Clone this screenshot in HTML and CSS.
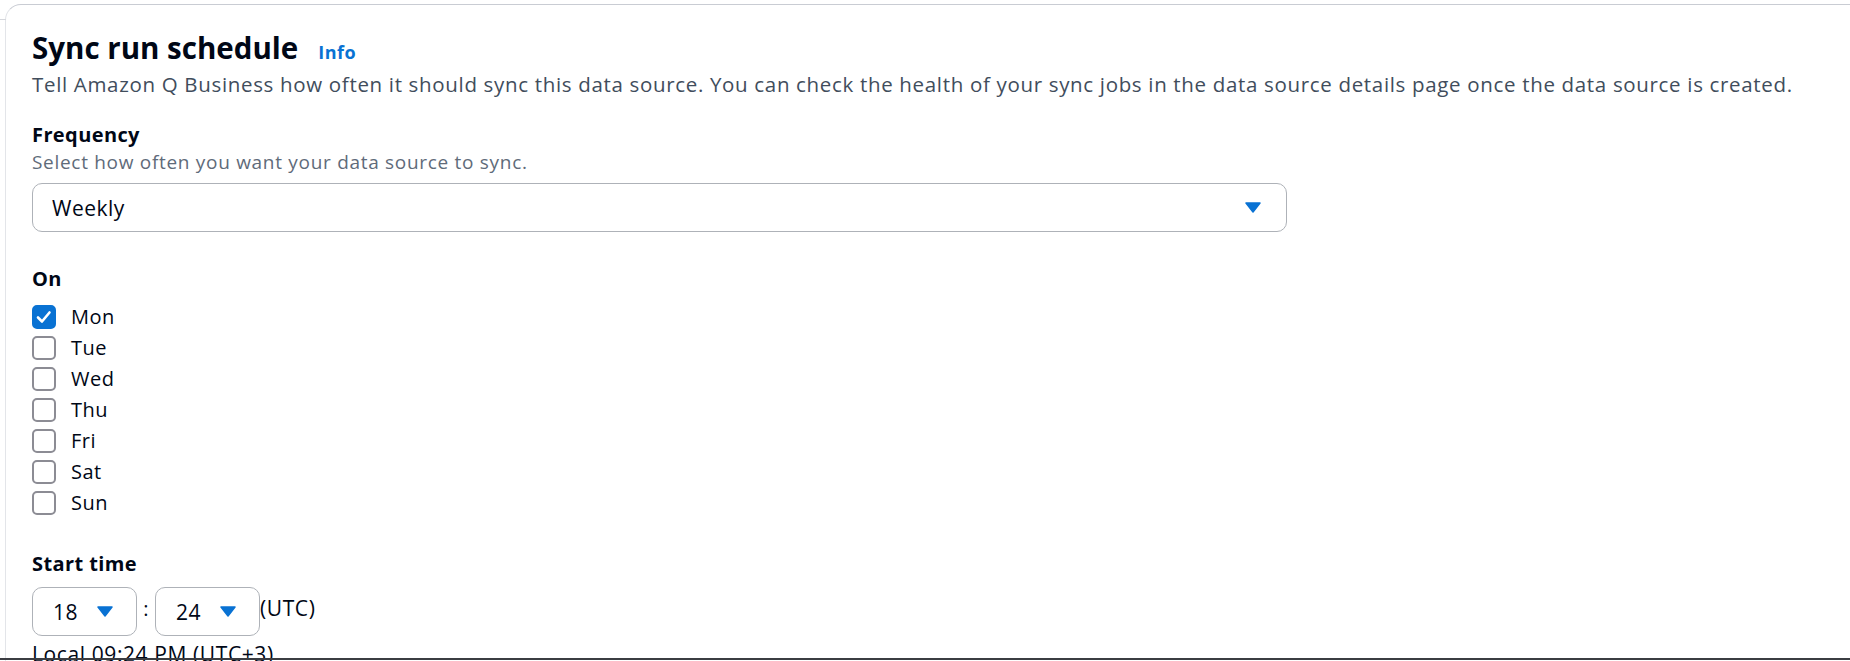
FILE: index.html
```html
<!DOCTYPE html>
<html lang="en">
<head>
<meta charset="utf-8">
<title>Sync run schedule</title>
<link rel="stylesheet" href="styles.css">
</head>
<body>
<div class="edge-tick"></div>
<main class="card">
  <header class="head">
    <h2 class="title">Sync run schedule</h2>
    <a class="info" href="#">Info</a>
  </header>
  <p class="desc">Tell Amazon Q Business how often it should sync this data source. You can check the health of your sync jobs in the data source details page once the data source is created.</p>

  <section class="field freq">
    <div class="label">Frequency</div>
    <div class="hint">Select how often you want your data source to sync.</div>
    <div class="select wide">
      <span class="value">Weekly</span>
      <svg class="caret" viewBox="0 0 16 11" width="16" height="11"><path d="M1 1 H15 L8 10 Z" fill="#0972d3" stroke="#0972d3" stroke-width="1.5" stroke-linejoin="round"/></svg>
    </div>
  </section>

  <section class="field on">
    <div class="label">On</div>
    <ul class="days">
      <li class="day"><span class="box checked"><svg viewBox="0 0 24 24" width="24" height="24"><polyline points="6,12.5 10,16.5 17.5,7.5" fill="none" stroke="#fff" stroke-width="2.6" stroke-linecap="round" stroke-linejoin="round"/></svg></span><span class="day-name">Mon</span></li>
      <li class="day"><span class="box"></span><span class="day-name">Tue</span></li>
      <li class="day"><span class="box"></span><span class="day-name">Wed</span></li>
      <li class="day"><span class="box"></span><span class="day-name">Thu</span></li>
      <li class="day"><span class="box"></span><span class="day-name">Fri</span></li>
      <li class="day"><span class="box"></span><span class="day-name">Sat</span></li>
      <li class="day"><span class="box"></span><span class="day-name">Sun</span></li>
    </ul>
  </section>

  <section class="field start">
    <div class="label">Start time</div>
    <div class="time-row">
      <div class="select small">
        <span class="value">18</span>
        <svg class="caret" viewBox="0 0 16 11" width="16" height="11"><path d="M1 1 H15 L8 10 Z" fill="#0972d3" stroke="#0972d3" stroke-width="1.5" stroke-linejoin="round"/></svg>
      </div>
      <span class="colon">:</span>
      <div class="select small">
        <span class="value">24</span>
        <svg class="caret" viewBox="0 0 16 11" width="16" height="11"><path d="M1 1 H15 L8 10 Z" fill="#0972d3" stroke="#0972d3" stroke-width="1.5" stroke-linejoin="round"/></svg>
      </div>
      <span class="tz">(UTC)</span>
    </div>
    <div class="local">Local 09:24 PM (UTC+3)</div>
  </section>
</main>
<div class="bottom-line"></div>
</body>
</html>
```

FILE: styles.css
```css
* { box-sizing: border-box; }

html, body {
  margin: 0;
  padding: 0;
  height: 661px;
  overflow: hidden;
  background: #ffffff;
}

body {
  font-family: "Open Sans", "Noto Sans", Arial, sans-serif;
  color: #000716;
  padding: 4px 0 0 5px;
}

.edge-tick {
  position: absolute;
  top: 19px;
  left: 0;
  width: 6px;
  height: 1px;
  background: #d5d7dc;
}

.card {
  border-top: 1px solid #c9ccd3;
  border-left: 1px solid #e3e5e9;
  border-top-left-radius: 16px;
  padding: 25px 0 0 26px;
  height: 657px;
}

.head {
  display: flex;
  align-items: baseline;
  gap: 20px;
  height: 36px;
}

.title {
  margin: 0;
  font-size: 29.5px;
  line-height: 36px;
  font-weight: 700;
  color: #000716;
}

.info {
  font-size: 18px;
  letter-spacing: 0.5px;
  font-weight: 700;
  color: #0972d3;
  text-decoration: none;
}

.desc {
  margin: 4px 0 0;
  font-size: 20.5px;
  letter-spacing: 0.67px;
  line-height: 28px;
  color: #414d5c;
  white-space: nowrap;
}

.field { margin: 0; }

.label {
  font-size: 20px;
  letter-spacing: 0.4px;
  line-height: 26px;
  font-weight: 700;
  color: #000716;
}

.freq { margin-top: 24px; }

.hint {
  margin-top: 1px;
  font-size: 19px;
  letter-spacing: 0.7px;
  line-height: 26px;
  color: #5f6b7a;
}

.select {
  display: flex;
  align-items: center;
  justify-content: space-between;
  height: 49px;
  border: 1px solid #aeb2b8;
  border-radius: 10px;
  background: #fff;
  font-size: 21px;
  letter-spacing: 0.5px;
  color: #000716;
}

.select.wide {
  width: 1255px;
  margin-top: 8px;
  padding: 0 19px 0 19px;
}

.select.wide .caret { margin-right: 6px; }

.on { margin-top: 34px; }

.days {
  list-style: none;
  margin: 9px 0 0;
  padding: 0;
}

.day {
  display: flex;
  align-items: center;
  height: 31px;
  font-size: 20px;
  letter-spacing: 0.5px;
  color: #000716;
}

.box {
  width: 24px;
  height: 24px;
  border: 2px solid #8c8c94;
  border-radius: 5px;
  margin-right: 15px;
  flex: none;
  display: flex;
  align-items: center;
  justify-content: center;
}

.box.checked {
  background: #0972d3;
  border-color: #0972d3;
}

.box.checked svg { flex: none; }

.start { margin-top: 33px; }

.time-row {
  display: flex;
  align-items: center;
  margin-top: 10px;
}

.select.small {
  width: 105px;
  padding: 0 23px 0 20px;
}

.colon {
  width: 18px;
  text-align: center;
  font-size: 20px;
  line-height: 1;
  margin-top: -6px;
}

.tz {
  font-size: 21px;
  letter-spacing: 0.6px;
  margin-top: -8px;
}

.local {
  margin-top: 5px;
  font-size: 21px;
  letter-spacing: 0.6px;
  line-height: 26px;
  color: #000716;
}

.bottom-line {
  position: fixed;
  left: 0;
  right: 0;
  bottom: 1px;
  height: 2px;
  background: #3b3d42;
}
```
